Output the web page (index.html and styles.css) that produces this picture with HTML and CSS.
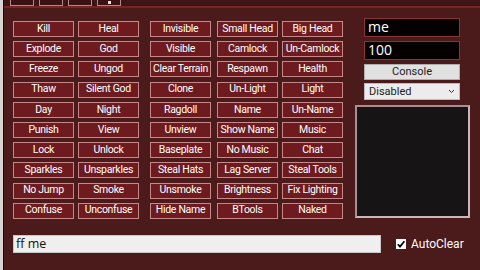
FILE: index.html
```html
<!DOCTYPE html>
<html>
<head>
<meta charset="utf-8">
<link rel="stylesheet" href="styles.css">
</head>
<body>
<div class="desk">
  <div class="strip"></div>
  <div class="win">
    <div class="topbar">
      <div class="tabs">
        <span class="tab"></span><span class="tab"></span><span class="tab"></span><span class="tab mark"></span>
      </div>
    </div>
    <div class="rule"></div>
    <div class="body">
      <div class="main">
        <div class="grid">
          <div class="btn">Kill</div><div class="btn">Heal</div><div class="btn">Invisible</div><div class="btn">Small Head</div><div class="btn">Big Head</div>
          <div class="btn">Explode</div><div class="btn">God</div><div class="btn">Visible</div><div class="btn">Camlock</div><div class="btn">Un-Camlock</div>
          <div class="btn">Freeze</div><div class="btn">Ungod</div><div class="btn">Clear Terrain</div><div class="btn">Respawn</div><div class="btn">Health</div>
          <div class="btn">Thaw</div><div class="btn">Silent God</div><div class="btn">Clone</div><div class="btn">Un-Light</div><div class="btn">Light</div>
          <div class="btn">Day</div><div class="btn">Night</div><div class="btn">Ragdoll</div><div class="btn">Name</div><div class="btn">Un-Name</div>
          <div class="btn">Punish</div><div class="btn">View</div><div class="btn">Unview</div><div class="btn">Show Name</div><div class="btn">Music</div>
          <div class="btn">Lock</div><div class="btn">Unlock</div><div class="btn">Baseplate</div><div class="btn">No Music</div><div class="btn">Chat</div>
          <div class="btn">Sparkles</div><div class="btn">Unsparkles</div><div class="btn">Steal Hats</div><div class="btn">Lag Server</div><div class="btn">Steal Tools</div>
          <div class="btn">No Jump</div><div class="btn">Smoke</div><div class="btn">Unsmoke</div><div class="btn">Brightness</div><div class="btn">Fix Lighting</div>
          <div class="btn">Confuse</div><div class="btn">Unconfuse</div><div class="btn">Hide Name</div><div class="btn">BTools</div><div class="btn">Naked</div>
        </div>
        <div class="side">
          <div class="field">me</div>
          <div class="field">100</div>
          <div class="console">Console</div>
          <div class="combo"><span>Disabled</span>
            <svg class="chev" width="7" height="5" viewBox="0 0 7 5"><path d="M1 1 L3.5 3.5 L6 1" fill="none" stroke="#333" stroke-width="1"/></svg>
          </div>
          <div class="output"></div>
        </div>
      </div>
      <div class="bottom">
        <div class="cmd">ff me</div>
        <div class="chk">
          <span class="box"><svg width="10" height="10" viewBox="0 0 10 10"><path d="M1.8 5.2 L4 7.6 L8.4 2.2" fill="none" stroke="#000" stroke-width="1.7"/></svg></span>
          <span class="lbl">AutoClear</span>
        </div>
      </div>
    </div>
  </div>
</div>
</body>
</html>
```
FILE: styles.css
```css
* { box-sizing: border-box; }
html, body { margin: 0; padding: 0; }
body {
  width: 480px; height: 270px; overflow: hidden;
  background: #4b1a1b;
  font-family: "Roboto", "Open Sans", sans-serif;
}
.desk { display: flex; height: 270px; }
.strip {
  width: 4px; flex: none;
  background: #d8d4d4;
  border-right: 1px solid #1c0c0c;
}
.win { flex: 1; display: flex; flex-direction: column; background: #4b1a1b; }
.topbar {
  height: 6px; overflow: hidden; background: #3e1517;
  display: flex; align-items: flex-end; padding-left: 6px;
}
.tabs { display: flex; gap: 5px; align-items: flex-end; }
.tab {
  display: block; width: 24px; height: 14px;
  border: 1px solid #b08a8a; background: #3a1214;
  position: relative;
}
.tab.mark::after {
  content: ""; position: absolute; left: 10px; bottom: 1px;
  width: 3px; height: 3px; background: #e8e0e0;
}
.rule { height: 2px; background: #7a2224; }
.body { padding: 10px 0 0 9px; }
.main { display: flex; align-items: flex-start; }
.grid {
  margin-top: 3px;
  display: grid;
  grid-template-columns: 65px 72px 67px 65px 60px;
  grid-auto-rows: 16px;
  row-gap: 4.2px;
}
.btn {
  width: 61px; height: 16px;
  background: #6d1b1e;
  border: 1px solid #c8888a;
  color: #fff;
  font-size: 10.5px; letter-spacing: -0.3px;
  display: flex; align-items: center; justify-content: center;
  white-space: nowrap; line-height: 1;
}
.side { margin-left: 13px; width: 115px; display: flex; flex-direction: column; }
.field {
  margin-left: 9px; width: 96px; height: 19px;
  background: #050101; border: 1px solid #8a3434;
  color: #fff; font-family: "Open Sans", sans-serif; font-size: 14px; line-height: 16px; padding-left: 3px;
  margin-bottom: 4px;
}
.console {
  margin-left: 9px; width: 96px; height: 16px;
  background: #e1e1e1; border: 1px solid #adadad;
  color: #222; font-size: 11px; line-height: 14px; text-align: center;
  margin-bottom: 3px;
}
.combo {
  margin-left: 9px; width: 96px; height: 17px;
  background: #ececec; border: 1px solid #bcbcbc;
  color: #222; font-size: 11px; line-height: 15px; padding-left: 4px;
  display: flex; justify-content: space-between; align-items: center;
  margin-bottom: 5px;
}
.chev { margin-right: 4px; }
.output {
  width: 115px; height: 113px;
  background: #161414; border: 2px solid #a89090;
  border-right-color: #c8b8b8; border-bottom-color: #c8b8b8;
}
.bottom { display: flex; align-items: center; margin-top: 16px; }
.cmd {
  width: 368px; height: 18px;
  background: #efefef; border: 1px solid #c8c8c8;
  color: #111; font-family: "Open Sans", sans-serif; font-size: 12.5px; line-height: 16px; padding-left: 2px;
}
.chk { display: flex; align-items: center; margin-left: 15px; }
.box {
  width: 10px; height: 10px; background: #fff; display: block;
}
.box svg { display: block; }
.lbl { color: #fff; font-size: 12px; margin-left: 5px; }
```
